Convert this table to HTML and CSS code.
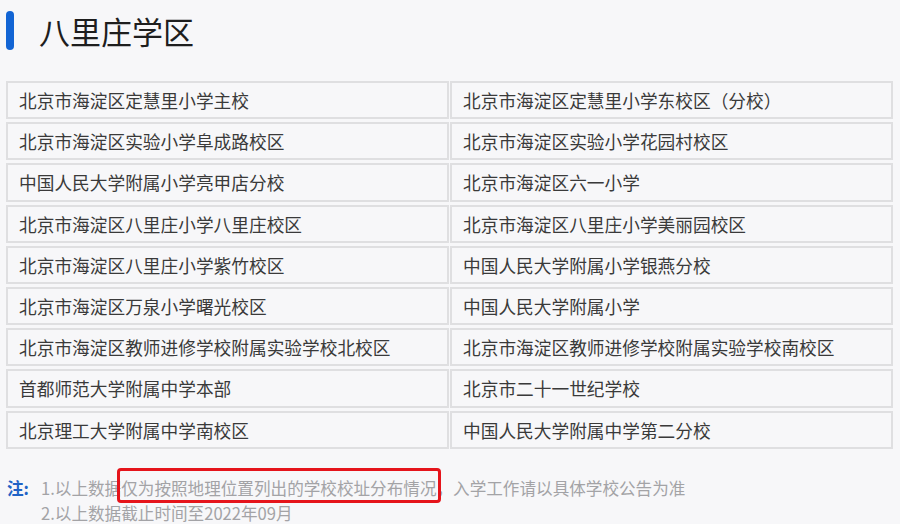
FILE: index.html
```html
<!doctype html>
<html lang="zh-CN">
<head>
	<meta charset="UTF-8">
	<title>八里庄学区</title>
	<link rel="stylesheet" href="styles.css">
</head>
<body>
	<div class="district">
		<h1 class="district-title"><span class="title-bar"></span>八里庄学区</h1>
		<ul class="school-list">
			<li>北京市海淀区定慧里小学主校</li>
			<li>北京市海淀区定慧里小学东校区（分校）</li>
			<li>北京市海淀区实验小学阜成路校区</li>
			<li>北京市海淀区实验小学花园村校区</li>
			<li>中国人民大学附属小学亮甲店分校</li>
			<li>北京市海淀区六一小学</li>
			<li>北京市海淀区八里庄小学八里庄校区</li>
			<li>北京市海淀区八里庄小学美丽园校区</li>
			<li>北京市海淀区八里庄小学紫竹校区</li>
			<li>中国人民大学附属小学银燕分校</li>
			<li>北京市海淀区万泉小学曙光校区</li>
			<li>中国人民大学附属小学</li>
			<li>北京市海淀区教师进修学校附属实验学校北校区</li>
			<li>北京市海淀区教师进修学校附属实验学校南校区</li>
			<li>首都师范大学附属中学本部</li>
			<li>北京市二十一世纪学校</li>
			<li>北京理工大学附属中学南校区</li>
			<li>中国人民大学附属中学第二分校</li>
		</ul>
		<div class="note">
			<b class="note-label">注:</b>
			<div class="note-lines">
				<p>1.以上数据<span class="mark">仅为按照地理位置列出的学校校址分布情况</span>，入学工作请以具体学校公告为准</p>
				<p>2.以上数据截止时间至2022年09月</p>
			</div>
		</div>
	</div>
</body>
</html>
```

FILE: styles.css
```css
* { padding: 0; margin: 0; box-sizing: border-box; }
li { list-style: none; }
body { background: #f7f7f9; font-family: "Noto Sans CJK SC", "Noto Sans", sans-serif; color: #333; }

.district { padding: 11px 7px 0 6px; }
.district-title { display: flex; align-items: center; height: 39px; font-size: 31px; font-weight: normal; color: #1e1e1e; line-height: 39px; }
.title-bar { width: 8px; height: 39px; border-radius: 4px; background: #1264d4; margin-right: 25px; }

.school-list { display: grid; grid-template-columns: 443px 443px; column-gap: 1px; row-gap: 3px; margin-top: 31px; }
.school-list li { height: 38.2px; border: 2px solid #dfdfe1; padding-left: 11px; font-size: 17.7px; line-height: 34px; color: #3a3a3a; white-space: nowrap; }

.note { display: flex; margin-top: 27px; font-size: 16.6px; line-height: 25px; color: #a3a3a6; }
.note-label { color: #1f63c6; width: 35px; padding-left: 1px; font-weight: bold; }
.note-lines p { white-space: nowrap; }
.mark { position: relative; }
.mark:after { content: ""; position: absolute; left: -4px; right: -5px; top: -8px; bottom: -3px; border: 3px solid #e5141b; border-radius: 4px; }
```
